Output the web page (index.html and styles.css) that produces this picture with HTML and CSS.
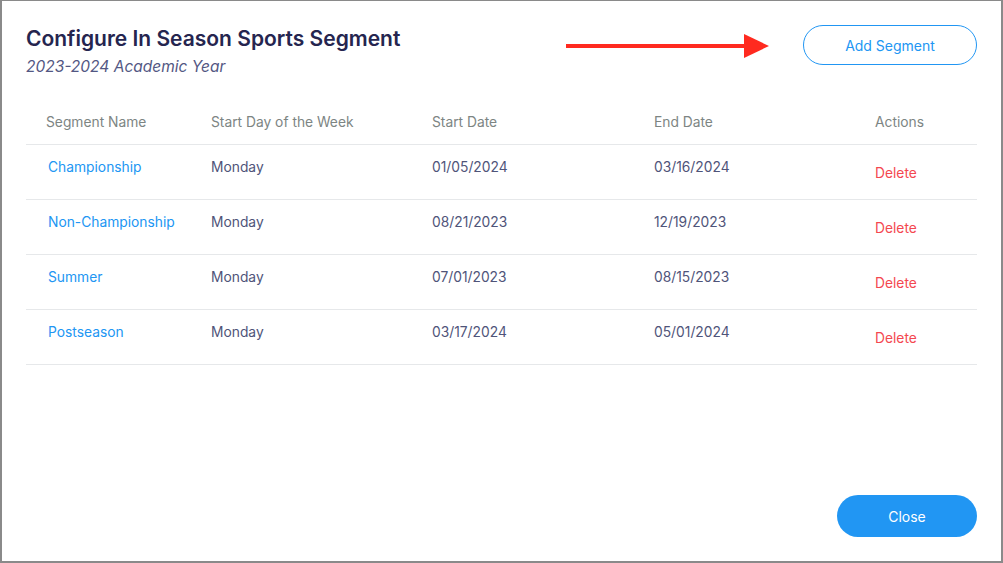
FILE: index.html
```html
<!DOCTYPE html>
<html>
<head>
<meta charset="utf-8">
<link rel="stylesheet" href="styles.css">
</head>
<body>
<div class="frame">
  <div class="edge-mark"></div>
  <div class="modal">
    <div class="head">
      <div class="titles">
        <h1 class="title">Configure In Season Sports Segment</h1>
        <div class="subtitle">2023-2024 Academic Year</div>
      </div>
      <div class="head-right">
        <svg class="arrow" width="203" height="26" viewBox="0 0 203 26">
          <rect x="0" y="11" width="182" height="4" fill="#ff2a1f"/>
          <polygon points="178,1 203,13 178,25" fill="#ff2a1f"/>
        </svg>
        <button class="btn-outline">Add Segment</button>
      </div>
    </div>
    <div class="table">
      <div class="row header">
        <div class="cell">Segment Name</div>
        <div class="cell">Start Day of the Week</div>
        <div class="cell">Start Date</div>
        <div class="cell">End Date</div>
        <div class="cell">Actions</div>
      </div>
      <div class="row">
        <div class="cell link">Championship</div>
        <div class="cell">Monday</div>
        <div class="cell">01/05/2024</div>
        <div class="cell">03/16/2024</div>
        <div class="cell del">Delete</div>
      </div>
      <div class="row">
        <div class="cell link">Non-Championship</div>
        <div class="cell">Monday</div>
        <div class="cell">08/21/2023</div>
        <div class="cell">12/19/2023</div>
        <div class="cell del">Delete</div>
      </div>
      <div class="row">
        <div class="cell link">Summer</div>
        <div class="cell">Monday</div>
        <div class="cell">07/01/2023</div>
        <div class="cell">08/15/2023</div>
        <div class="cell del">Delete</div>
      </div>
      <div class="row">
        <div class="cell link">Postseason</div>
        <div class="cell">Monday</div>
        <div class="cell">03/17/2024</div>
        <div class="cell">05/01/2024</div>
        <div class="cell del">Delete</div>
      </div>
    </div>
    <div class="foot">
      <button class="btn-solid">Close</button>
    </div>
  </div>
</div>
</body>
</html>
```
FILE: styles.css
```css
* { box-sizing: border-box; }
html, body { margin: 0; padding: 0; background: #fff; }
body { font-family: Inter, "Noto Sans", sans-serif; }
.frame {
  width: 1003px;
  height: 563px;
  border-style: solid;
  border-color: #8a8a8a;
  border-width: 1px 2px 2px 2px;
  position: relative;
  overflow: hidden;
}
.edge-mark {
  position: absolute;
  left: -2px;
  top: 118px;
  width: 2px;
  height: 42px;
  background: #4f7fa8;
}
.modal {
  height: 100%;
  padding: 24px 24px 0 24px;
  display: flex;
  flex-direction: column;
}
.head {
  display: flex;
  justify-content: space-between;
  align-items: flex-start;
}
.titles { padding-top: 1px; }
.title {
  margin: 0;
  font-family: Inter, sans-serif;
  font-weight: 600;
  font-size: 21px;
  line-height: 25px;
  color: #25254f;
}
.subtitle {
  margin-top: 6px;
  font-style: italic;
  font-size: 15.5px;
  line-height: 20px;
  color: #535783;
}
.head-right {
  display: flex;
  align-items: center;
  gap: 34px;
}
.arrow { display: block; margin-top: 1px; }
.btn-outline {
  width: 174px;
  height: 40px;
  border: 1px solid #2196f3;
  border-radius: 20px;
  background: #fff;
  color: #2196f3;
  font-family: Inter, sans-serif;
  font-size: 14px;
}
.table {
  margin-top: 21px;
}
.row {
  display: grid;
  grid-template-columns: 165px 221px 222px 221px 122px;
  height: 55px;
  border-bottom: 1px solid #e6e8ea;
  font-size: 13.8px;
  line-height: 18px;
  color: #4f5479;
}
.row.header {
  height: 47px;
  color: #7d8583;
}
.cell { padding: 13px 0 0 20px; }
.row.header .cell { padding-top: 15px; }
.link { color: #2196f3; padding-left: 22px; }
.del { color: #f4474f; padding-top: 19px; }
.foot {
  margin-top: auto;
  display: flex;
  justify-content: flex-end;
  padding-bottom: 24px;
}
.btn-solid {
  width: 140px;
  height: 42px;
  border: none;
  border-radius: 21px;
  background: #2196f3;
  color: #fff;
  font-family: Inter, sans-serif;
  font-size: 14px;
}
```
